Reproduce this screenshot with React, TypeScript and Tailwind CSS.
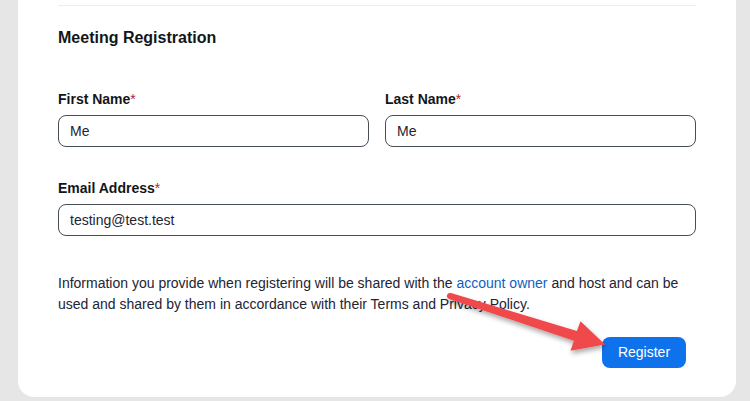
import React from "react";

export default function App() {
  return (
    <div
      className="relative w-[750px] h-[401px] bg-[#e6e6e6] pl-[18px] pr-[14px] pb-[4px] overflow-hidden"
      style={{ fontFamily: '"Liberation Sans", Arial, sans-serif' }}
    >
      <div className="h-full bg-white rounded-b-[16px] px-[40px] pt-[5px] flex flex-col text-[#232333]">
        <div className="h-px bg-[#ededed]" />
        <h1 className="mt-[20px] text-[16px] leading-[24px] font-bold text-[#131619]">Meeting Registration</h1>

        <div className="mt-[39px] grid grid-cols-2 gap-x-[16px]">
          <Field label="First Name" value="Me" />
          <Field label="Last Name" value="Me" />
        </div>

        <div className="mt-[31px]">
          <Field label="Email Address" value="testing@test.test" />
        </div>

        <p className="mt-[37px] text-[14px] leading-[21px] text-[#232333]">
          Information you provide when registering will be shared with the{" "}
          <a className="text-[#0e5fc2]">account owner</a> and host and can be used and shared by them in
          accordance with their Terms and Privacy Policy.
        </p>

        <div className="mt-[22px] flex justify-end pr-[10px]">
          <button className="w-[84px] h-[31px] rounded-[8px] bg-[#0e72ed] text-white text-[14px] leading-[31px]">
            Register
          </button>
        </div>
      </div>

      <svg className="absolute left-0 top-0 pointer-events-none" width="750" height="401" viewBox="0 0 750 401">
        <defs>
          <filter id="sh" x="-20%" y="-20%" width="140%" height="160%">
            <feDropShadow dx="1" dy="3" stdDeviation="2.5" floodColor="#000" floodOpacity="0.35" />
          </filter>
        </defs>
        <g filter="url(#sh)">
          <path
            d="M450.9 293.1 L576.9 331.1 L580.5 321.2 L605 344.5 L570.5 350.8 L573.9 340.7 L449.1 298.9 A3 3 0 0 1 450.9 293.1 Z"
            fill="#f0484b"
          />
        </g>
      </svg>
    </div>
  );
}

function Field({ label, value }: { label: string; value: string }) {
  return (
    <div className="flex flex-col">
      <label className="text-[14px] leading-[20px] font-bold text-[#131619]">
        {label}
        <span className="font-normal text-[#b8232f]">*</span>
      </label>
      <input
        readOnly
        defaultValue={value}
        className="mt-[6px] h-[32px] w-full rounded-[8px] border border-[#464d55] px-[11px] text-[14px] text-[#232333] outline-none bg-white"
      />
    </div>
  );
}
